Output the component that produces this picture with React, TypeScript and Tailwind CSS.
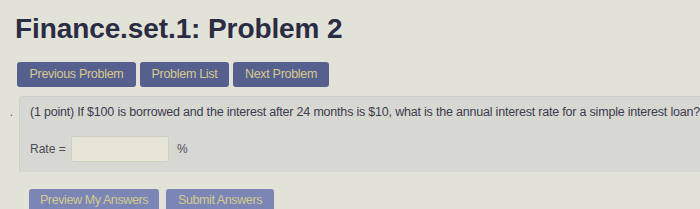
export default function App() {
  return (
    <div className="w-[700px] h-[209px] overflow-hidden bg-[#e3e2d9] text-[#2f3140] font-['Liberation_Sans',Arial,sans-serif]">
      <div className="pl-[15px] pt-[13px]">
        <h1 className="text-[28px] leading-[32px] font-bold text-[#2a2c43] tracking-[-0.1px]">
          Finance.set.1: Problem 2
        </h1>
      </div>
      <div className="flex gap-[4px] pl-[17px] mt-[17px]">
        <button className="h-[25px] w-[119px] rounded-[3px] bg-[#55608f] text-[12.5px] text-[#d9c98d] tracking-[-0.3px]">
          Previous Problem
        </button>
        <button className="h-[25px] w-[89px] rounded-[3px] bg-[#55608f] text-[12.5px] text-[#d9c98d] tracking-[-0.3px]">
          Problem List
        </button>
        <button className="h-[25px] w-[96px] rounded-[3px] bg-[#55608f] text-[12.5px] text-[#d9c98d] tracking-[-0.3px]">
          Next Problem
        </button>
      </div>
      <div className="flex mt-[9px]">
        <div className="w-[20px] flex justify-center pt-[10px] pl-[4px]">
          <span className="text-[12px] leading-none text-[#55576a]">.</span>
        </div>
        <div className="flex-1 h-[76px] rounded-l-[3px] border-t border-l border-[#cfcfca] bg-[#d8d8d2] pl-[10px] pt-[8px]">
          <p className="text-[12.5px] leading-[14px] whitespace-nowrap text-[#3a3c4f] tracking-[-0.2px]">
            (1 point) If $100 is borrowed and the interest after 24 months is $10, what is the annual interest rate for a simple interest loan?
          </p>
          <div className="flex items-center mt-[17px]">
            <span className="text-[12px] text-[#4a4c5a] w-[41px]">Rate =</span>
            <div className="w-[98px] h-[26px] rounded-[3px] border border-[#cfcfc4] bg-[#e6e5d8]"></div>
            <span className="text-[12px] text-[#4a4c5a] ml-[8px]">%</span>
          </div>
        </div>
      </div>
      <div className="flex gap-[7px] pl-[29px] mt-[17px]">
        <button className="h-[26px] w-[130px] rounded-[3px] bg-[#7b86b6] text-[12.5px] text-[#d4ca8e] tracking-[-0.4px] pb-[4px]">
          Preview My Answers
        </button>
        <button className="h-[26px] w-[108px] rounded-[3px] bg-[#7b86b6] text-[12.5px] text-[#d4ca8e] tracking-[-0.4px] pb-[4px]">
          Submit Answers
        </button>
      </div>
    </div>
  );
}
